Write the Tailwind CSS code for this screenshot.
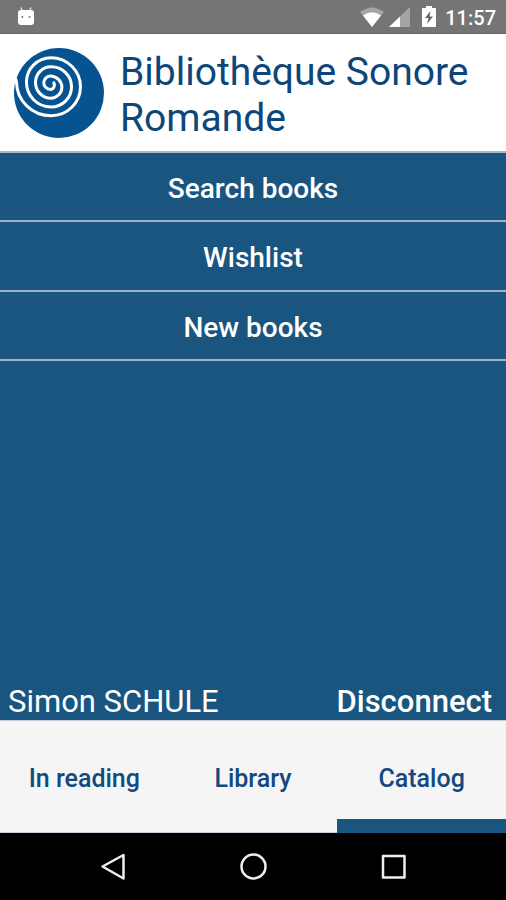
<!DOCTYPE html>
<html lang="en">
<head>
  <meta charset="UTF-8">
  <meta name="viewport" content="width=device-width, initial-scale=1.0">
  <title>Bibliothèque Sonore Romande</title>

  <!-- Tailwind CSS -->
  <script src="https://cdn.jsdelivr.net/npm/@tailwindcss/browser@4"></script>
</head>
<body class="min-h-screen flex flex-col bg-[#19557f] font-[Roboto,sans-serif]">

  <!-- Status bar -->
  <div class="h-[34px] shrink-0 flex items-center justify-between bg-[#757575] border-b border-[#666666] pl-4 pr-[10px] text-white">
    <svg class="w-5 h-6" viewBox="0 0 20 24" fill="none" aria-hidden="true">
      <path d="M5 2.500l2 5M15 2.500l-2 5" stroke="#dddddd" stroke-width="1.500" />
      <path d="M2 8Q2 5 5 5H15Q18 5 18 8V17Q18 20 15 20H5Q2 20 2 17Z" fill="#ffffff" />
      <circle cx="6.300" cy="12" r="1" fill="#777777" />
      <circle cx="13.500" cy="12" r="1" fill="#777777" />
    </svg>
    <div class="flex items-center">
      <svg class="w-6 h-5" viewBox="0 0 24 20" aria-hidden="true">
        <path d="M0 5Q12-4 24 5L12 20Z" fill="#a5a5a5" />
        <path d="M3 8.500Q12 2 21 8.500L12 20Z" fill="#ffffff" />
      </svg>
      <svg class="w-[21px] h-5 ml-[5px]" viewBox="0 0 21 20" aria-hidden="true">
        <path d="M21 0V20H0Z" fill="#a5a5a5" />
        <path d="M11 9.500V20H0Z" fill="#ffffff" />
      </svg>
      <svg class="w-[14px] h-[21px] ml-3" viewBox="0 0 14 21" aria-hidden="true">
        <path d="M4 0H10V2H13Q14 2 14 3V20Q14 21 13 21H1Q0 21 0 20V3Q0 2 1 2H4Z" fill="#ffffff" />
        <path d="M8.500 5L3 12H6.500L5 18L11 10.500H7.500Z" fill="#666666" />
      </svg>
      <span class="ml-[9px] pt-[2px] text-[20px] leading-6 font-medium">11:57</span>
    </div>
  </div>

  <!-- Header -->
  <header class="flex items-start gap-4 bg-white border-b-2 border-[#a9b8c9] pl-[14px] pr-4 pt-[14px] pb-[10px]">
    <svg class="w-[90px] h-[90px] shrink-0" viewBox="0 0 90 90" fill="none" aria-hidden="true">
      <circle cx="45" cy="45" r="45" fill="#075290" />
      <path d="M1.500 30L2.500 34A34.500 34 0 0 0 37 67.700A29.500 29 0 0 0 37 9.700A24.500 24.600 0 0 0 37 59A20.500 20.100 0 0 0 37 18.700A15.500 15.800 0 0 0 37 50.300A12 11.200 0 0 0 37 28A7 6.700 0 0 0 36.500 41.400C40.500 41 41.500 36 39 34" stroke="#ffffff" stroke-width="3" />
    </svg>
    <h1 class="pt-px text-[39px] leading-[46px] text-[#0d4679]">Bibliothèque Sonore Romande</h1>
  </header>

  <!-- Catalog menu -->
  <main class="flex-1 flex flex-col text-white">
    <button type="button" class="h-[69px] pt-1 border-b-2 border-[#9fb0c5] text-[28px] leading-8 font-medium">Search books</button>
    <button type="button" class="h-[70px] pt-1 border-b-2 border-[#9fb0c5] text-[28px] leading-8 font-medium">Wishlist</button>
    <button type="button" class="h-[69px] pt-1 border-b-2 border-[#9fb0c5] text-[28px] leading-8 font-medium">New books</button>

    <div class="mt-auto flex justify-between items-center pl-2 pr-[14px] text-[31px] leading-9">
      <span>Simon SCHULE</span>
      <button type="button" class="font-medium">Disconnect</button>
    </div>
  </main>

  <!-- Tabs -->
  <nav class="h-[113px] shrink-0 grid grid-cols-3 bg-[#f5f5f5] text-[25px] leading-7 font-medium text-[#124980]">
    <a href="#reading" class="flex items-center justify-center pt-1 border-y border-y-[#c3ccd6]">In reading</a>
    <a href="#library" class="flex items-center justify-center pt-1 border-y border-y-[#c3ccd6]">Library</a>
    <a href="#catalog" aria-current="page" class="relative flex items-center justify-center pt-[3px] border-t border-t-[#c3ccd6]">
      Catalog
      <span class="absolute inset-x-0 bottom-0 h-[14px] bg-[#19557f]"></span>
    </a>
  </nav>

  <!-- System navigation -->
  <div class="h-[67px] shrink-0 flex items-center justify-center gap-[112px] bg-black">
    <button type="button" aria-label="Back">
      <svg class="block w-7 h-7" viewBox="0 0 28 28" fill="none" stroke="#eeeeee" stroke-width="2.500" stroke-linejoin="round">
        <path d="M24.500 2V25.500L3.500 13.500Z" />
      </svg>
    </button>
    <button type="button" aria-label="Home">
      <svg class="block w-7 h-7" viewBox="0 0 28 28" fill="none" stroke="#eeeeee" stroke-width="2.500">
        <circle cx="14.500" cy="13.500" r="12" />
      </svg>
    </button>
    <button type="button" aria-label="Recent apps">
      <svg class="block w-7 h-7" viewBox="0 0 28 28" fill="none" stroke="#eeeeee" stroke-width="2.500" stroke-linejoin="round">
        <rect x="4" y="3" width="21.500" height="21.500" />
      </svg>
    </button>
  </div>

</body>
</html>
